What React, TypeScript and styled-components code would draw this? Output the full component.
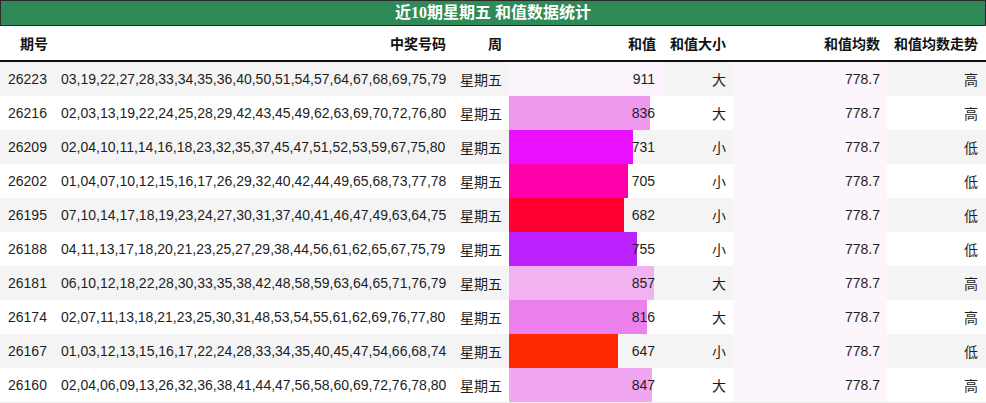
import React from "react";
import styled, { createGlobalStyle } from "styled-components";

const Global = createGlobalStyle`
  html, body { margin: 0; padding: 0; background: #fff; }
  body { font-family: "Liberation Sans", "Noto Sans CJK SC", sans-serif; }
`;

const COLS = "55px 398px 56px 154px 70px 154px 98px";

const Wrap = styled.div`
  width: 986px;
  box-sizing: border-box;
`;

const Title = styled.div`
  height: 26px;
  box-sizing: border-box;
  border: 1px solid #2a2a2a;
  background: #2e8b57;
  color: #fff;
  font-family: "Liberation Serif", "Noto Sans CJK SC", serif;
  font-weight: bold;
  font-size: 16px;
  display: flex;
  align-items: center;
  justify-content: center;
  line-height: 1;
`;

const HeadRow = styled.div`
  display: grid;
  grid-template-columns: ${COLS};
  height: 36px;
  box-sizing: border-box;
  border-bottom: 2px solid #111;
`;

const HeadCell = styled.div`
  display: flex;
  align-items: center;
  justify-content: flex-end;
  padding: 0 7px 0 0;
  font-weight: bold;
  font-size: 14px;
  color: #111;
  font-family: "Liberation Sans", "Noto Sans CJK SC", sans-serif;
`;

const Body = styled.div`
  border-bottom: 1px solid #eee;
`;

const Row = styled.div<{ $odd: boolean }>`
  display: grid;
  grid-template-columns: ${COLS};
  height: 34px;
  background: ${(p) => (p.$odd ? "#f4f4f4" : "#ffffff")};
`;

const Cell = styled.div<{ $align?: "left" | "right" }>`
  position: relative;
  display: flex;
  align-items: center;
  justify-content: ${(p) => (p.$align === "left" ? "flex-start" : "flex-end")};
  padding: ${(p) => (p.$align === "left" ? "0 0 0 6px" : "0 7px 0 0")};
  font-size: 14px;
  color: #1e1e1e;
  white-space: nowrap;
`;

const SumCell = styled(Cell)`
  background: #fff;
  padding-right: 8px;
`;

const SumCellOdd = styled(SumCell)`
  background: #f4f4f4;
`;

const AvgCell = styled(Cell)`
  background: #fcf5fc;
`;

const Bar = styled.div`
  position: absolute;
  left: 0;
  top: 0;
  bottom: 0;
`;

const CellText = styled.span`
  position: relative;
`;

const IdCell = styled(Cell)`
  padding: 0 8px 0 8px;
  justify-content: flex-start;
`;

type Rec = { id: string; nums: string; sum: number; size: string; trend: string; color: string };

const data: Rec[] = [
  { id: "26223", nums: "03,19,22,27,28,33,34,35,36,40,50,51,54,57,64,67,68,69,75,79", sum: 911, size: "大", trend: "高", color: "#fcf4fc" },
  { id: "26216", nums: "02,03,13,19,22,24,25,28,29,42,43,45,49,62,63,69,70,72,76,80", sum: 836, size: "大", trend: "高", color: "#ee99ee" },
  { id: "26209", nums: "02,04,10,11,14,16,18,23,32,35,37,45,47,51,52,53,59,67,75,80", sum: 731, size: "小", trend: "低", color: "#e810ff" },
  { id: "26202", nums: "01,04,07,10,12,15,16,17,26,29,32,40,42,44,49,65,68,73,77,78", sum: 705, size: "小", trend: "低", color: "#ff00aa" },
  { id: "26195", nums: "07,10,14,17,18,19,23,24,27,30,31,37,40,41,46,47,49,63,64,75", sum: 682, size: "小", trend: "低", color: "#ff0033" },
  { id: "26188", nums: "04,11,13,17,18,20,21,23,25,27,29,38,44,56,61,62,65,67,75,79", sum: 755, size: "小", trend: "低", color: "#bb22ff" },
  { id: "26181", nums: "06,10,12,18,22,28,30,33,35,38,42,48,58,59,63,64,65,71,76,79", sum: 857, size: "大", trend: "高", color: "#f2b2f2" },
  { id: "26174", nums: "02,07,11,13,18,21,23,25,30,31,48,53,54,55,61,62,69,76,77,80", sum: 816, size: "大", trend: "高", color: "#ec80ec" },
  { id: "26167", nums: "01,03,12,13,15,16,17,22,24,28,33,34,35,40,45,47,54,66,68,74", sum: 647, size: "小", trend: "低", color: "#ff2800" },
  { id: "26160", nums: "02,04,06,09,13,26,32,36,38,41,44,47,56,58,60,69,72,76,78,80", sum: 847, size: "大", trend: "高", color: "#f0a6f0" },
];

const MAX = 911;
const BAR_W = 154;

export default function App() {
  return (
    <Wrap>
      <Global />
      <Title>近10期星期五 和值数据统计</Title>
      <HeadRow>
        <HeadCell>期号</HeadCell>
        <HeadCell>中奖号码</HeadCell>
        <HeadCell>周</HeadCell>
        <HeadCell>和值</HeadCell>
        <HeadCell>和值大小</HeadCell>
        <HeadCell>和值均数</HeadCell>
        <HeadCell>和值均数走势</HeadCell>
      </HeadRow>
      <Body>
        {data.map((r, i) => {
          const odd = i % 2 === 0;
          const S = odd ? SumCellOdd : SumCell;
          return (
            <Row key={r.id} $odd={odd}>
              <IdCell>{r.id}</IdCell>
              <Cell $align="left">{r.nums}</Cell>
              <Cell>星期五</Cell>
              <S>
                <Bar style={{ width: Math.round((r.sum / MAX) * BAR_W), background: r.color }} />
                <CellText>{r.sum}</CellText>
              </S>
              <Cell>{r.size}</Cell>
              <AvgCell>778.7</AvgCell>
              <Cell>{r.trend}</Cell>
            </Row>
          );
        })}
      </Body>
    </Wrap>
  );
}
